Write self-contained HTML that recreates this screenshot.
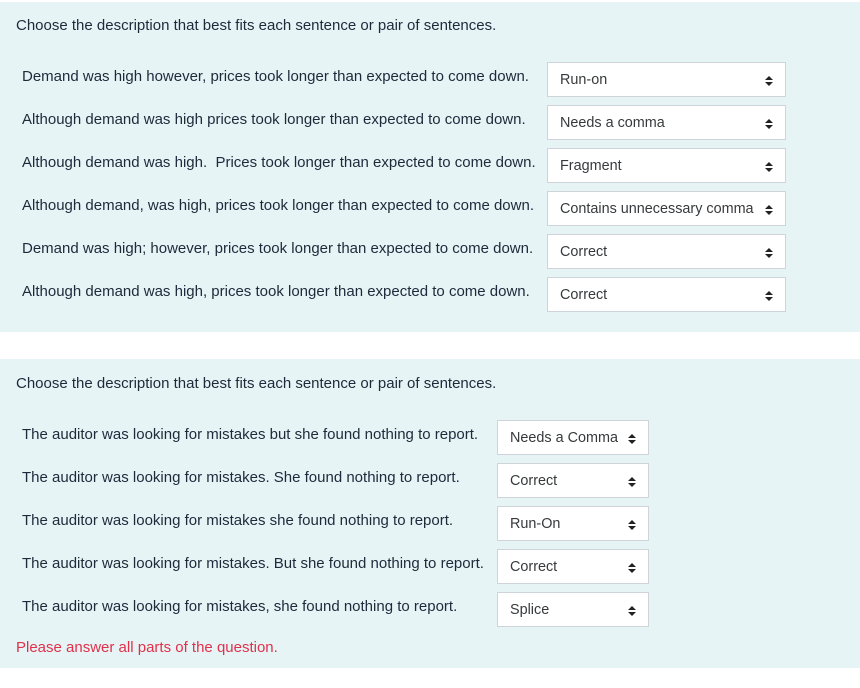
<!DOCTYPE html>
<html><head><style>
body{margin:0;width:860px;height:688px;background:#fff;font-family:"Liberation Sans",sans-serif;font-size:15px;color:#1d2a3a;position:relative;overflow:hidden}
.p{position:absolute;left:0;width:860px;background:#e7f4f6}
.t{position:absolute;white-space:nowrap;line-height:16px}
.s{position:absolute;background:#fff;border:1px solid #ced4da;line-height:35px;padding-left:12px;box-sizing:border-box;height:35px;color:#373a3c;white-space:nowrap;font-size:14.4px}
.s:after{content:"";position:absolute;right:12px;top:13px;width:0;height:0;border-left:4px solid transparent;border-right:4px solid transparent;border-bottom:4px solid #222}
.s:before{content:"";position:absolute;right:12px;top:19px;width:0;height:0;border-left:4px solid transparent;border-right:4px solid transparent;border-top:4px solid #222}
</style></head><body>
<div class="p" style="top:2px;height:330px"></div>
<div class="p" style="top:359px;height:309px"></div>
<div class="t" style="left:16px;top:18px">Choose the description that best fits each sentence or pair of sentences.</div>
<div class="t" style="left:22px;top:69px">Demand was high however, prices took longer than expected to come down.</div>
<div class="t" style="left:22px;top:112px">Although demand was high prices took longer than expected to come down.</div>
<div class="t" style="left:22px;top:155px">Although demand was high.&nbsp; Prices took longer than expected to come down.</div>
<div class="t" style="left:22px;top:198px">Although demand, was high, prices took longer than expected to come down.</div>
<div class="t" style="left:22px;top:241px">Demand was high; however, prices took longer than expected to come down.</div>
<div class="t" style="left:22px;top:284px">Although demand was high, prices took longer than expected to come down.</div>
<div class="s" style="left:547px;top:62px;width:239px">Run-on</div>
<div class="s" style="left:547px;top:105px;width:239px">Needs a comma</div>
<div class="s" style="left:547px;top:148px;width:239px">Fragment</div>
<div class="s" style="left:547px;top:191px;width:239px">Contains unnecessary comma</div>
<div class="s" style="left:547px;top:234px;width:239px">Correct</div>
<div class="s" style="left:547px;top:277px;width:239px">Correct</div>
<div class="t" style="left:16px;top:376px">Choose the description that best fits each sentence or pair of sentences.</div>
<div class="t" style="left:22px;top:427px">The auditor was looking for mistakes but she found nothing to report.</div>
<div class="t" style="left:22px;top:470px">The auditor was looking for mistakes. She found nothing to report.</div>
<div class="t" style="left:22px;top:513px">The auditor was looking for mistakes she found nothing to report.</div>
<div class="t" style="left:22px;top:556px">The auditor was looking for mistakes. But she found nothing to report.</div>
<div class="t" style="left:22px;top:599px">The auditor was looking for mistakes, she found nothing to report.</div>
<div class="s" style="left:497px;top:420px;width:152px">Needs a Comma</div>
<div class="s" style="left:497px;top:463px;width:152px">Correct</div>
<div class="s" style="left:497px;top:506px;width:152px">Run-On</div>
<div class="s" style="left:497px;top:549px;width:152px">Correct</div>
<div class="s" style="left:497px;top:592px;width:152px">Splice</div>
<div class="t" style="left:16px;top:640px;color:#e0314b">Please answer all parts of the question.</div>
</body></html>
